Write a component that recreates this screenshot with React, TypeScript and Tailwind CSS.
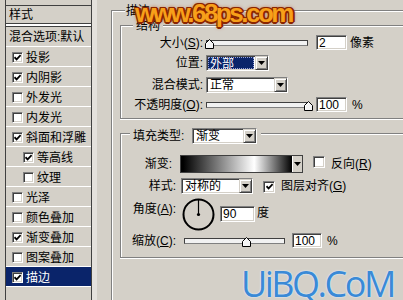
import type { CSSProperties, ReactNode } from 'react'

const SUNKEN =
  'border border-t-[#808080] border-l-[#808080] border-r-white border-b-white shadow-[inset_1px_1px_0_#404040,inset_-1px_-1px_0_#d4d0c8]'
const RAISED =
  'border border-t-[#d4d0c8] border-l-[#d4d0c8] border-r-[#404040] border-b-[#404040] shadow-[inset_1px_1px_0_#fff,inset_-1px_-1px_0_#808080]'
const GROUP = 'border-t border-l border-b border-[#808080] shadow-[inset_1px_1px_0_#fff,0_1px_0_#fff]'

function Tick() {
  return (
    <svg width="7" height="7" viewBox="0 0 7 7">
      <path d="M0.5 3.2 L2.6 5.4 L6.6 1.2" fill="none" stroke="#000" strokeWidth="1.7" />
    </svg>
  )
}

function Check({ on, big = false }: { on: boolean; big?: boolean }) {
  return (
    <span
      className={`${big ? 'w-[12px] h-[12px]' : 'w-[11px] h-[11px]'} shrink-0 inline-flex items-center justify-center bg-white ${SUNKEN}`}
    >
      {on && <Tick />}
    </span>
  )
}

function Arrow() {
  return (
    <svg width="7" height="4" viewBox="0 0 7 4">
      <path d="M0 0 H7 L3.5 4 Z" fill="#000" />
    </svg>
  )
}

function Select({ className, text, hl = false }: { className: string; text: string; hl?: boolean }) {
  return (
    <div className={`${className} h-[16px] shrink-0 bg-white flex ${SUNKEN}`}>
      <div className="flex-1 flex items-center px-[1px]">
        {hl ? (
          <span className="flex-1 h-[12px] leading-[12px] pl-[1px] bg-[#0a246a] text-white border border-dotted border-[#9aa4d8]">
            {text}
          </span>
        ) : (
          <span className="pl-[2px] leading-[12px]">{text}</span>
        )}
      </div>
      <div className={`w-[13px] h-full bg-[#d4d0c8] flex items-center justify-center ${RAISED}`}>
        <Arrow />
      </div>
    </div>
  )
}

function Field({ className, value }: { className: string; value: string }) {
  return (
    <div className={`${className} shrink-0 bg-white flex items-center pl-[2px] text-[12px] leading-[12px] ${SUNKEN}`}>
      {value}
    </div>
  )
}

function Slider({ className, thumb }: { className: string; thumb: number }) {
  const style: CSSProperties = { left: thumb }
  return (
    <div className={`${className} relative h-[6px] shrink-0 border border-[#404040] border-b-[#808080] bg-[#f2f2f2]`}>
      <svg className="absolute top-[-2px]" style={style} width="9" height="10" viewBox="0 0 9 10">
        <path d="M0.5 9.5 V4.5 L4.5 0.5 L8.5 4.5 V9.5 Z" fill="#f4f4f4" stroke="#000" />
        <path d="M1.5 8.5 V4.9 L4.5 1.9" fill="none" stroke="#fff" />
      </svg>
    </div>
  )
}

function Legend({ className, children }: { className: string; children: ReactNode }) {
  return <div className={`${className} w-fit h-[16px] leading-[16px] bg-[#d4d0c8] flex items-center`}>{children}</div>
}

const items = [
  { t: '投影', on: true },
  { t: '内阴影', on: true },
  { t: '外发光', on: false },
  { t: '内发光', on: false },
  { t: '斜面和浮雕', on: true },
  { t: '等高线', on: true, sub: true },
  { t: '纹理', on: false, sub: true },
  { t: '光泽', on: false },
  { t: '颜色叠加', on: false },
  { t: '渐变叠加', on: true },
  { t: '图案叠加', on: false },
  { t: '描边', on: true, sel: true },
]

export default function App() {
  return (
    <div className="relative w-[403px] h-[300px] overflow-hidden flex bg-[#d4d0c8] text-black text-[12px] leading-[16px] font-['Liberation_Sans','Noto_Sans_CJK_SC',sans-serif]">

      {/* style list */}
      <div className="ml-[5px] w-[87px] h-full shrink-0 flex flex-col border-x border-[#404040]">
        <div className="h-[5px]" />
        <div className="h-[18px] border-t border-[#404040] flex items-center pl-[3px]">样式</div>
        <div className="h-[4px] border-y border-[#404040] bg-white" />
        <div className="h-[20px] border-b border-white flex items-center pl-[3px]">混合选项:默认</div>
        {items.map((it) => (
          <div
            key={it.t}
            className={`h-[20px] shrink-0 border-b border-white flex items-center pt-[2px] ${it.sub ? 'pl-[17px]' : 'pl-[6px]'} ${it.sel ? 'bg-[#0a246a] text-white' : ''}`}
          >
            <Check on={it.on} />
            <span className="ml-[3px]">{it.t}</span>
          </div>
        ))}
      </div>
      <div className="w-[5px] h-full shrink-0 bg-[#e4e1dc]" />

      {/* stroke settings */}
      <div className="ml-[14px] mt-[10px] w-[300px] h-[300px] shrink-0 border-t border-l border-[#808080] shadow-[inset_1px_1px_0_#fff]">
        <Legend className="-mt-[8px] ml-[13px] px-[1px]">描边</Legend>

        {/* 结构 */}
        <div className={`ml-[8px] mt-[6px] w-[300px] pb-[6px] ${GROUP}`}>
          <Legend className="-mt-[8px] ml-[12px] px-[3px]">结构</Legend>

          <div className="h-[17px] flex items-center">
            <span className="w-[82px] text-right">大小(<u>S</u>):</span>
            <Slider className="ml-[3px] w-[102px]" thumb={-2} />
            <Field className="ml-[8px] w-[31px] h-[15px]" value="2" />
            <span className="ml-[3px]">像素</span>
          </div>
          <div className="mt-[4px] h-[16px] flex items-center">
            <span className="w-[82px] text-right">位置:</span>
            <Select className="ml-[3px] w-[63px]" text="外部" hl />
          </div>
          <div className="mt-[6px] h-[16px] flex items-center">
            <span className="w-[82px] text-right">混合模式:</span>
            <Select className="ml-[3px] w-[82px]" text="正常" />
          </div>
          <div className="mt-[4px] h-[15px] flex items-center">
            <span className="w-[82px] text-right">不透明度(<u>O</u>):</span>
            <Slider className="ml-[3px] w-[102px]" thumb={97} />
            <Field className="ml-[8px] w-[31px] h-[15px]" value="100" />
            <span className="ml-[5px]">%</span>
          </div>
        </div>

        {/* 填充类型 */}
        <div className={`ml-[8px] mt-[14px] w-[300px] pb-[9px] ${GROUP}`}>
          <Legend className="-mt-[6px] ml-[9px] pl-[3px] pr-[4px]">
            <span className="w-[57px]">填充类型:</span>
            <Select className="ml-[2px] w-[65px]" text="渐变" />
          </Legend>

          <div className="mt-[11px] h-[18px] flex items-center">
            <span className="w-[51px] text-right">渐变:</span>
            <div className="ml-[8px] w-[123px] h-[18px] shrink-0 flex border border-[#404040] bg-white">
              <div className="flex-1 bg-[linear-gradient(to_right,#000_2%,#fff_66%,#000_100%)]" />
              <div className="w-[10px] bg-[#d4d0c8] border-l border-white flex items-center justify-center">
                <Arrow />
              </div>
            </div>
            <span className="ml-[10px]">
              <Check on={false} big />
            </span>
            <span className="ml-[6px]">反向(<u>R</u>)</span>
          </div>

          <div className="mt-[5px] h-[16px] flex items-center">
            <span className="w-[55px] text-right">样式:</span>
            <Select className="ml-[5px] w-[72px]" text="对称的" />
            <span className="ml-[10px]">
              <Check on big />
            </span>
            <span className="ml-[6px]">图层对齐(<u>G</u>)</span>
          </div>

          <div className="mt-[4px] h-[32px] flex items-start">
            <span className="w-[55px] mt-[3px] text-right">角度(<u>A</u>):</span>
            <svg className="ml-[6px] shrink-0" width="33" height="33" viewBox="0 0 33 33">
              <circle cx="16.5" cy="16.5" r="15" fill="none" stroke="#000" strokeWidth="2" />
              <line x1="16.5" y1="16.5" x2="16.5" y2="2" stroke="#000" strokeWidth="1.2" />
              <circle cx="16.5" cy="16.5" r="1.6" fill="#000" />
            </svg>
            <Field className="ml-[5px] mt-[8px] w-[35px] h-[16px]" value="90" />
            <span className="ml-[2px] mt-[7px]">度</span>
          </div>

          <div className="mt-[3px] h-[15px] flex items-center">
            <span className="w-[55px] text-right">缩放(<u>C</u>):</span>
            <Slider className="ml-[8px] w-[101px]" thumb={57} />
            <Field className="ml-[7px] w-[30px] h-[15px]" value="100" />
            <span className="ml-[5px]">%</span>
          </div>
        </div>
      </div>

      {/* watermarks */}
      <div className="absolute left-[135px] top-0 leading-none text-[26px] font-bold tracking-[-2.5px] text-[#f7a01a] font-['Liberation_Sans',sans-serif] [text-shadow:-1px_-1px_0_#8a2500,1px_-1px_0_#8a2500,-1px_1px_0_#8a2500,1px_1px_0_#8a2500,0_2px_0_#8a2500,2px_0_0_#8a2500,0_0_4px_#b04000]">
        www.68ps.com
      </div>
      <div className="absolute left-[241px] top-[266px] leading-none text-[36px] font-medium tracking-[-2.5px] text-[#3a8ad6] font-['Open_Sans',sans-serif] [text-shadow:0_0_2px_#d8ecff,0_0_1px_#fff]">
        UiBQ.CoM
      </div>
    </div>
  )
}
